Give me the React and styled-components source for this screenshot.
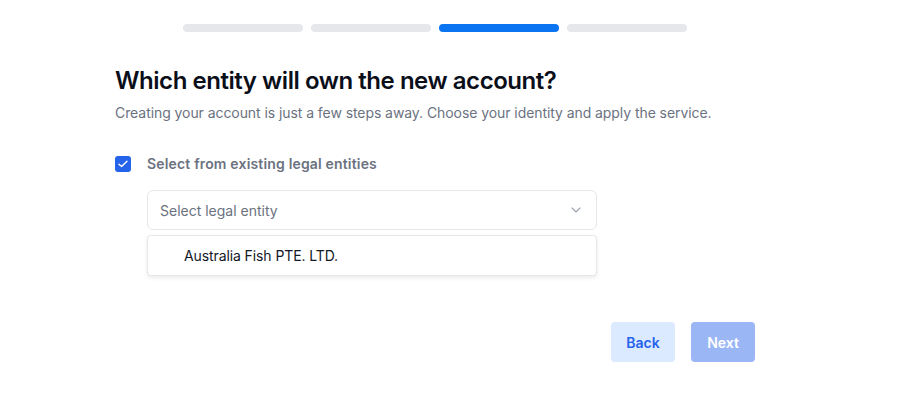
import React from "react";
import styled, { createGlobalStyle } from "styled-components";

const Global = createGlobalStyle`
  html, body { margin: 0; padding: 0; background: #ffffff; }
  body { font-family: Inter, "Noto Sans", sans-serif; -webkit-font-smoothing: antialiased; }
  * { box-sizing: border-box; }
`;

const Page = styled.div`
  width: 918px;
  height: 417px;
  padding: 24px 0 0 115px;
`;

const Container = styled.div`
  width: 640px;
  display: flex;
  flex-direction: column;
`;

const Steps = styled.div`
  display: flex;
  justify-content: center;
  gap: 8px;
`;

const Step = styled.div`
  width: 120px;
  height: 8px;
  border-radius: 4px;
  background: ${(p) => (p.$active ? "#0b74f0" : "#e5e7eb")};
`;

const Title = styled.h1`
  margin: 33px 0 0;
  font-size: 24px;
  line-height: 32px;
  font-weight: 600;
  color: #0b0f1a;
  letter-spacing: -0.45px;
`;

const Subtitle = styled.p`
  margin: 6px 0 0;
  font-size: 14px;
  line-height: 20px;
  color: #6b7280;
  letter-spacing: -0.07px;
`;

const CheckRow = styled.label`
  margin-top: 31px;
  display: flex;
  align-items: center;
  gap: 16px;
`;

const Box = styled.span`
  width: 16px;
  height: 16px;
  border-radius: 3px;
  background: #2563eb;
  display: flex;
  align-items: center;
  justify-content: center;
`;

const Label = styled.span`
  font-size: 14px;
  line-height: 20px;
  font-weight: 600;
  color: #6b7280;
  letter-spacing: 0.17px;
`;

const Field = styled.div`
  margin: 16px 0 0 32px;
  width: 450px;
`;

const Select = styled.div`
  height: 40px;
  border: 1px solid #e5e7eb;
  border-radius: 6px;
  display: flex;
  align-items: center;
  justify-content: space-between;
  padding: 0 15px 0 12px;
  font-size: 14px;
  color: #6b7280;
`;

const Menu = styled.div`
  margin-top: 5px;
  height: 41px;
  border: 1px solid #e5e7eb;
  border-radius: 4px;
  box-shadow: 0 2px 4px rgba(0, 0, 0, 0.08);
  display: flex;
  align-items: center;
  padding-left: 36px;
  font-size: 14px;
  color: #111827;
  background: #fff;
  letter-spacing: -0.1px;
`;

const Actions = styled.div`
  margin-top: 46px;
  display: flex;
  justify-content: flex-end;
  gap: 16px;
`;

const Button = styled.button`
  width: 64px;
  height: 40px;
  border: none;
  border-radius: 4px;
  font-family: inherit;
  font-size: 14px;
  font-weight: 600;
  background: ${(p) => (p.$primary ? "#9bb6f5" : "#dbeafe")};
  color: ${(p) => (p.$primary ? "#ffffff" : "#2563eb")};
`;

export default function App() {
  return (
    <Page>
      <Global />
      <Container>
        <Steps>
          <Step />
          <Step />
          <Step $active />
          <Step />
        </Steps>
        <Title>Which entity will own the new account?</Title>
        <Subtitle>
          Creating your account is just a few steps away. Choose your identity and apply the service.
        </Subtitle>
        <CheckRow>
          <Box>
            <svg width="10" height="8" viewBox="0 0 10 8" fill="none">
              <path d="M1 4.2L3.6 6.6L9 1.2" stroke="#fff" strokeWidth="1.4" strokeLinecap="round" strokeLinejoin="round" />
            </svg>
          </Box>
          <Label>Select from existing legal entities</Label>
        </CheckRow>
        <Field>
          <Select>
            <span>Select legal entity</span>
            <svg width="10" height="6" viewBox="0 0 10 6" fill="none">
              <path d="M1 1L5 5L9 1" stroke="#9ca3af" strokeWidth="1.1" strokeLinecap="round" strokeLinejoin="round" />
            </svg>
          </Select>
          <Menu>Australia Fish PTE. LTD.</Menu>
        </Field>
        <Actions>
          <Button>Back</Button>
          <Button $primary>Next</Button>
        </Actions>
      </Container>
    </Page>
  );
}
